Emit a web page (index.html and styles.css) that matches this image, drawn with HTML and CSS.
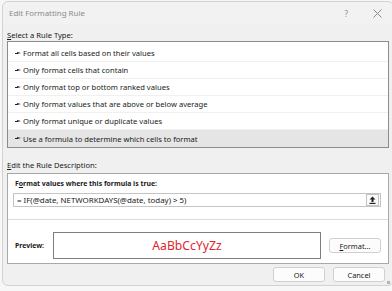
FILE: index.html
```
<!DOCTYPE html>
<html lang="en">
<head>
    <meta charset="UTF-8">
    <title>Edit Formatting Rule</title>
    <link rel="stylesheet" href="styles.css">
</head>
<body>
    <div class="window">
        <div class="title-bar">
            <span class="title">Edit Formatting Rule</span>
            <span class="title-help">?</span>
            <span class="title-close">
                <svg width="9" height="9" viewBox="0 0 9 9"><path d="M0.5 0.5 L8.5 8.5 M8.5 0.5 L0.5 8.5" stroke="#8a8a8a" stroke-width="1" fill="none"/></svg>
            </span>
        </div>

        <div class="dialog-body">
            <div class="label"><u>S</u>elect a Rule Type:</div>
            <ul class="rule-list">
                <li class="rule-item"><span class="arrow"></span>Format all cells based on their values</li>
                <li class="rule-item"><span class="arrow"></span>Only format cells that contain</li>
                <li class="rule-item"><span class="arrow"></span>Only format top or bottom ranked values</li>
                <li class="rule-item"><span class="arrow"></span>Only format values that are above or below average</li>
                <li class="rule-item"><span class="arrow"></span>Only format unique or duplicate values</li>
                <li class="rule-item selected"><span class="arrow"></span>Use a formula to determine which cells to format</li>
            </ul>

            <div class="label label-desc"><u>E</u>dit the Rule Description:</div>
            <div class="desc-box">
                <div class="desc-top">
                    <div class="bold-label">F<u>o</u>rmat values where this formula is true:</div>
                    <div class="formula-input">
                        <span class="formula-text">= IF(@date, NETWORKDAYS(@date, today) &gt; 5)</span>
                        <span class="collapse-btn">
                            <svg width="7" height="8" viewBox="0 0 7 8"><path d="M3.5 0.5 L6.5 3.5 L4.5 3.5 L4.5 6 L2.5 6 L2.5 3.5 L0.5 3.5 Z" fill="#222"/><rect x="0.5" y="6.8" width="6" height="1.2" fill="#222"/></svg>
                        </span>
                    </div>
                </div>
                <div class="preview-row">
                    <div class="bold-label preview-label">Preview:</div>
                    <div class="preview-box">AaBbCcYyZz</div>
                    <button class="btn btn-format" type="button"><u>F</u>ormat...</button>
                </div>
            </div>

            <div class="footer">
                <button class="btn" type="button">OK</button>
                <button class="btn" type="button">Cancel</button>
            </div>
        </div>
        <div class="grip"></div>
    </div>
</body>
</html>
```

FILE: styles.css
```
html, body {
    overflow: hidden;
}

body {
    margin: 0;
    background-color: #f7f7f7;
    font-family: "Noto Sans", Arial, sans-serif;
    font-size: 7.6px;
    color: #1a1a1a;
}

.window {
    position: relative;
    box-sizing: border-box;
    width: 392px;
    height: 285px;
    margin: 1px 0 0 2px;
    background: #f0f0f0;
    border: 1px solid #d2d2d2;
    border-radius: 6px;
}

.title-bar {
    display: flex;
    align-items: center;
    height: 22px;
    padding-left: 6px;
    background: #f2f2f2;
    border-radius: 6px 6px 0 0;
}

    .title-bar .title {
        flex: 1;
        font-size: 7.9px;
        color: #8c8c8c;
    }

    .title-bar .title-help {
        font-size: 8px;
        color: #8c8c8c;
        margin-right: 25px;
    }

    .title-bar .title-close {
        display: flex;
        margin-right: 11px;
    }

.dialog-body {
    padding: 0 4px;
}

.label {
    padding-top: 6px;
    line-height: 11px;
}

.label-desc {
    padding-top: 11px;
    line-height: 12px;
}

.rule-list {
    list-style: none;
    margin: 0;
    padding: 3px 0 0 0;
    background: #fff;
    border: 1px solid #8c8c8c;
}

    .rule-list .rule-item {
        display: flex;
        align-items: center;
        box-sizing: border-box;
        height: 17px;
        padding-left: 7px;
        border-bottom: 1px solid #f0f0f0;
    }

        .rule-list .rule-item.selected {
            background: #e5e5e5;
            border-bottom: none;
        }

    .rule-list .arrow {
        position: relative;
        width: 6px;
        height: 3px;
        margin-right: 2px;
    }

        .rule-list .arrow::before {
            content: "";
            position: absolute;
            left: 0;
            top: 1px;
            width: 3px;
            height: 1px;
            background: #222;
        }

        .rule-list .arrow::after {
            content: "";
            position: absolute;
            left: 2px;
            top: 0;
            border-left: 4px solid #222;
            border-top: 1.5px solid transparent;
            border-bottom: 1.5px solid transparent;
        }

.desc-box {
    margin-top: 2px;
    background: #fff;
    border: 1px solid #a9a9a9;
}

.desc-top {
    padding: 4px 7px 12px 5px;
    border-bottom: 1px solid #dcdcdc;
}

.bold-label {
    font-size: 6.9px;
    font-weight: bold;
    line-height: 11px;
    padding-left: 2px;
}

.formula-input {
    display: flex;
    align-items: center;
    box-sizing: border-box;
    height: 14px;
    margin-top: 4px;
    border: 1px solid #c4c4c4;
    padding-left: 3px;
}

    .formula-input .formula-text {
        flex: 1;
        font-size: 7.9px;
    }

    .formula-input .collapse-btn {
        display: flex;
        align-items: center;
        justify-content: center;
        box-sizing: border-box;
        width: 13px;
        height: 12px;
        margin-right: 1px;
        border: 1px solid #c4c4c4;
        background: #fbfbfb;
    }

.preview-row {
    display: flex;
    align-items: center;
    padding: 12px 7px 4px 5px;
}

.preview-label {
    width: 38px;
}

.preview-box {
    display: flex;
    align-items: center;
    justify-content: center;
    box-sizing: border-box;
    width: 268px;
    height: 27px;
    margin-right: 8px;
    border: 1px solid #7e7e7e;
    font-size: 12.2px;
    color: #e0262e;
}

.btn {
    box-sizing: border-box;
    width: 52px;
    height: 15px;
    padding: 0;
    font-family: "Noto Sans", Arial, sans-serif;
    font-size: 7.4px;
    color: #1a1a1a;
    background: #fcfcfc;
    border: 1px solid #d0d0d0;
    border-radius: 3px;
}

.footer {
    display: flex;
    justify-content: flex-end;
    gap: 8px;
    margin-top: 3px;
    margin-right: 4px;
}

.grip {
    position: absolute;
    right: 3px;
    bottom: 1px;
    width: 3px;
    height: 3px;
    background: radial-gradient(circle, #b5b5b5 0.6px, transparent 0.7px) 0 0 / 1.5px 1.5px;
}
```
